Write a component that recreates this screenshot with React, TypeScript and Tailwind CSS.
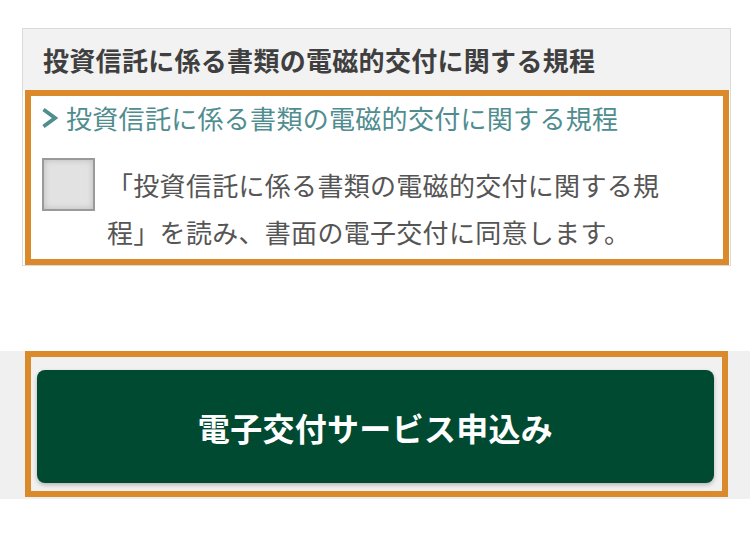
export default function App() {
  const font = { fontFamily: '"Noto Sans CJK JP", "Noto Sans", sans-serif' };
  return (
    <div className="w-[750px] h-[538px] bg-white overflow-hidden" style={font}>
      <div className="pt-[28px]">
        {/* regulation panel */}
        <div className="ml-[22px] w-[709px] border border-[#dadada] bg-white">
          <div className="h-[61px] bg-[#f2f2f2] pl-[20px] flex items-center">
            <h2 className="text-[26px] tracking-[0.3px] font-bold text-[#3f3f3f] leading-none">
              投資信託に係る書類の電磁的交付に関する規程
            </h2>
          </div>
          <div className="ml-[2px] mr-[1px] border-[6px] border-[#da8a2a] bg-white pl-[10px] pt-[4px] pb-[4px]">
            <a className="flex items-center h-[36px] text-[26px] tracking-[0.3px] text-[#4f8d8f] leading-none">
              <svg viewBox="0 0 17 22" className="w-[17px] h-[22px] shrink-0 mr-[8px]">
                <path d="M2.5 2.5 L14 11 L2.5 19.5" fill="none" stroke="#4f8d8f" strokeWidth="3.8" />
              </svg>
              投資信託に係る書類の電磁的交付に関する規程
            </a>
            <div className="flex items-start mt-[22px]">
              <div className="ml-[1px] w-[53px] h-[53px] shrink-0 border-2 border-[#9a9a9a] bg-[#e2e2e2] shadow-[inset_0_0_6px_rgba(0,0,0,0.18)]" />
              <p className="ml-[12px] mt-[3px] w-[570px] text-[26px] tracking-[0.3px] leading-[47px] text-[#555555]">
                「投資信託に係る書類の電磁的交付に関する規程」を読み、書面の電子交付に同意します。
              </p>
            </div>
          </div>
        </div>

        {/* apply button */}
        <div className="mt-[85px] h-[148px] bg-[#f0f0f0] pl-[25px]">
          <div className="w-[703px] h-[146px] border-[6px] border-[#da8a2a] bg-[#f1f1f1] pl-[6px] pr-[8px] pt-[13px]">
            <button className="w-full h-[113px] rounded-[8px] bg-[#004a32] shadow-[0_2px_4px_rgba(0,0,0,0.25)] text-white text-[32px] font-bold tracking-[0.3px]">
              電子交付サービス申込み
            </button>
          </div>
        </div>
      </div>
    </div>
  );
}
